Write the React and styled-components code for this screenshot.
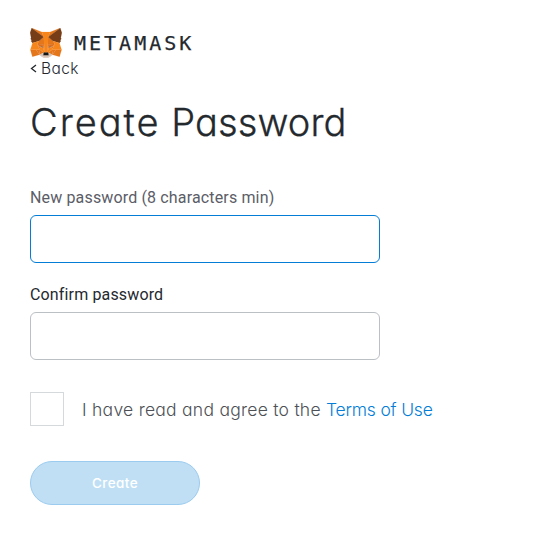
import React from "react";
import styled, { createGlobalStyle } from "styled-components";

const GlobalStyle = createGlobalStyle`
	* {
		box-sizing: border-box;
	}
	body {
		margin: 0;
		background: #ffffff;
		color: #24292e;
		font-family: Inter, Lato, sans-serif;
		font-feature-settings: "cv11";
	}
`;

const Page = styled.main`
	display: flex;
	flex-direction: column;
	align-items: flex-start;
	width: 535px;
	height: 540px;
	padding: 27px 30px 0;
`;

const Brand = styled.header`
	display: flex;
	align-items: center;
	height: 31px;
`;

const FoxSvg = styled.svg`
	display: block;
	width: 32px;
	height: 30px;
`;

const Wordmark = styled.span`
	margin-left: 12px;
	padding-top: 1px;
	font: 400 20px/30px "DejaVu Sans Mono", monospace;
	letter-spacing: 3px;
	-webkit-text-stroke: 0.25px #24292e;
`;

const BackButton = styled.button`
	display: flex;
	align-items: center;
	gap: 4px;
	height: 21px;
	padding: 0;
	border: 0;
	background: none;
	color: #24292e;
	font: 300 15.5px/20px Inter, Lato, sans-serif;
	font-feature-settings: "cv11";
	letter-spacing: 0.4px;
`;

const Title = styled.h1`
	margin: 18px 0 0;
	font-size: 38px;
	font-weight: 300;
	line-height: 50px;
	white-space: nowrap;
	-webkit-text-stroke: 0.3px #24292e;
`;

const Word = styled.span`
	letter-spacing: ${(props) => props.$spacing}px;
`;

const Field = styled.div`
	display: flex;
	flex-direction: column;
	margin-top: ${(props) => props.$top}px;
`;

const Label = styled.label`
	height: 27px;
	color: ${(props) => (props.$focused ? "#5b5d67" : "#24292e")};
	font: 400 16px/19px Roboto, sans-serif;
	letter-spacing: 0.15px;
`;

const Input = styled.input`
	width: 350px;
	height: 48px;
	padding: 0 12px;
	border: 1px solid ${(props) => (props.$focused ? "#037dd6" : "#bbc0c5")};
	border-radius: 6px;
	outline: none;
	background: #ffffff;
	font-size: 16px;
`;

const Terms = styled.div`
	display: flex;
	align-items: center;
	margin-top: 32px;
	height: 34px;
`;

const CheckBox = styled.div`
	flex: none;
	width: 34px;
	height: 34px;
	border: 1px solid #d6d9dc;
	background: #ffffff;
`;

const TermsText = styled.span`
	margin-left: 18px;
	padding-top: 2px;
	color: #4d5156;
	font-size: 17.5px;
	font-weight: 300;
	line-height: 24px;
	letter-spacing: 0.26px;
	white-space: nowrap;
`;

const TermsLink = styled.a`
	color: #037dd6;
	letter-spacing: -0.2px;
	text-decoration: none;
`;

const CreateButton = styled.button`
	width: 170px;
	height: 44px;
	margin-top: 35px;
	padding: 0;
	border: 1px solid #9bcbef;
	border-radius: 22px;
	background: #c0dff5;
	color: #ffffff;
	font: 500 13.5px/20px Inter, Lato, sans-serif;
	font-feature-settings: "cv11";
	letter-spacing: 0.4px;
`;

const foxShapes = [
	["#e2761b", "274.1,35.5 174.6,109.4 193,65.8"],
	["#e4761b", "44.4,35.5 143.1,110.1 125.6,65.8"],
	["#e4761b", "238.3,206.8 211.8,247.4 268.5,263 284.8,207.7"],
	["#e4761b", "33.9,207.7 50.1,263 106.8,247.4 80.3,206.8"],
	["#e4761b", "103.6,138.2 87.8,162.1 144.1,164.6 142.1,104.1"],
	["#e4761b", "214.9,138.2 175.9,103.4 174.6,164.6 230.8,162.1"],
	["#e4761b", "106.8,247.4 140.6,230.9 111.4,208.1"],
	["#e4761b", "177.9,230.9 211.8,247.4 207.1,208.1"],
	["#d7c1b3", "211.8,247.4 177.9,230.9 180.6,253 180.3,262.3"],
	["#d7c1b3", "106.8,247.4 138.3,262.3 138.1,253 140.6,230.9"],
	["#8a5a3c", "138.8,193.5 110.6,185.2 130.5,176.1"],
	["#8a5a3c", "179.7,193.5 188,176.1 208,185.2"],
	["#e4751f", "106.8,247.4 111.6,206.8 80.3,207.7"],
	["#e4751f", "207,206.8 211.8,247.4 238.3,207.7"],
	["#dd6f1c", "230.8,162.1 174.6,164.6 179.8,193.5 188.1,176.1 208.1,185.2"],
	["#dd6f1c", "110.6,185.2 130.6,176.1 138.8,193.5 144.1,164.6 87.8,162.1"],
	["#e4751f", "87.8,162.1 111.4,208.1 110.6,185.2"],
	["#e4751f", "208.1,185.2 207.1,208.1 230.8,162.1"],
	["#e4751f", "144.1,164.6 138.8,193.5 145.4,227.6 146.9,182.7"],
	["#e4751f", "174.6,164.6 171.9,182.6 173.1,227.6 179.8,193.5"],
	["#f6851b", "179.8,193.5 173.1,227.6 177.9,230.9 207.1,208.1 208.1,185.2"],
	["#f6851b", "110.6,185.2 111.4,208.1 140.6,230.9 145.4,227.6 138.8,193.5"],
	["#d7c1b3", "180.3,262.3 180.6,253 178.1,250.8 140.4,250.8 138.1,253 138.3,262.3 106.8,247.4 117.8,256.4 140.1,271.9 178.4,271.9 200.8,256.4 211.8,247.4"],
	["#161616", "177.9,230.9 173.1,227.6 145.4,227.6 140.6,230.9 138.1,253 140.4,250.8 178.1,250.8 180.6,253"],
	["#763d16", "278.3,114.2 286.8,73.4 274.1,35.5 177.9,106.9 214.9,138.2 267.2,153.5 278.8,140 273.8,136.4 281.8,129.1 275.6,124.3 283.6,118.2"],
	["#763d16", "31.8,73.4 40.3,114.2 34.9,118.2 42.9,124.3 36.8,129.1 44.8,136.4 39.8,140 51.3,153.5 103.6,138.2 140.6,106.9 44.4,35.5"],
	["#f6851b", "267.2,153.5 214.9,138.2 230.8,162.1 207.1,208.1 238.3,207.7 284.8,207.7"],
	["#f6851b", "103.6,138.2 51.3,153.5 33.9,207.7 80.3,207.7 111.4,208.1 87.8,162.1"],
	["#f6851b", "174.6,164.6 177.9,106.9 193.1,65.8 125.6,65.8 140.6,106.9 144.1,164.6 145.3,182.8 145.4,227.6 173.1,227.6 173.3,182.8"],
];

function Fox() {
	return (
		<FoxSvg viewBox='31 35 257 238' preserveAspectRatio='none' aria-hidden='true'>
			{foxShapes.map(([fill, points]) => (
				<polygon key={points} fill={fill} stroke={fill} strokeWidth='1' points={points} />
			))}
		</FoxSvg>
	);
}

function App() {
	return (
		<>
			<GlobalStyle />
			<Page>
				<Brand>
					<Fox />
					<Wordmark>METAMASK</Wordmark>
				</Brand>
				<BackButton>
					<svg width='7' height='9' viewBox='0 0 7 9' fill='none' stroke='currentColor' strokeWidth='1.3'>
						<path d='M6 1 1.5 4.5 6 8' />
					</svg>
					Back
				</BackButton>
				<Title>
					<Word $spacing={2}>Create</Word> <Word $spacing={0.1}>Password</Word>
				</Title>
				<Field $top={41}>
					<Label htmlFor='create-password' $focused>
						New password (8 characters min)
					</Label>
					<Input id='create-password' type='password' $focused />
				</Field>
				<Field $top={22}>
					<Label htmlFor='confirm-password'>Confirm password</Label>
					<Input id='confirm-password' type='password' />
				</Field>
				<Terms>
					<CheckBox role='checkbox' aria-checked='false' />
					<TermsText>
						I have read and agree to the <TermsLink>Terms of Use</TermsLink>
					</TermsText>
				</Terms>
				<CreateButton disabled>Create</CreateButton>
			</Page>
		</>
	);
}

export default App;
